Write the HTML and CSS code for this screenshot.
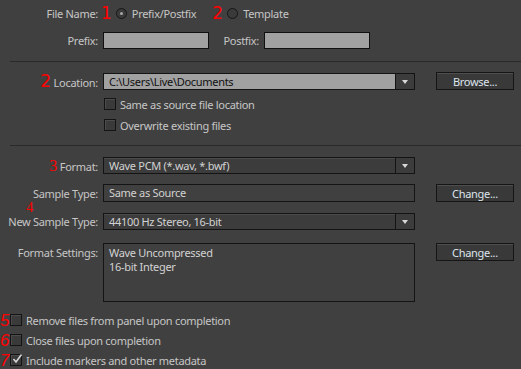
FILE: index.html
```html
<!DOCTYPE html>
<html lang="en">
<head>
    <meta charset="UTF-8">
    <title>Export Settings</title>
    <link rel="stylesheet" href="styles.css">
</head>
<body>
    <div class="panel">
        <!-- file name -->
        <div class="row name-row">
            <span class="label">File Name:</span>
            <span class="mark mark-sans">1</span>
            <span class="radio checked"></span>
            <span class="opt">Prefix/Postfix</span>
            <span class="mark mark-sans mark-two">2</span>
            <span class="radio"></span>
            <span class="opt">Template</span>
        </div>
        <div class="row prefix-row">
            <span class="label">Prefix:</span>
            <span class="textbox small"></span>
            <span class="sub-label">Postfix:</span>
            <span class="textbox small"></span>
        </div>

        <div class="divider"></div>

        <!-- location -->
        <div class="row loc-row">
            <span class="label"><span class="mark mark-sans">2</span> Location:</span>
            <div class="combo light">
                <span class="combo-text">C:\Users\Live\Documents</span>
                <span class="combo-arrow"></span>
            </div>
            <button class="btn">Browse...</button>
        </div>
        <div class="check-row top-check first">
            <span class="checkbox"></span>
            <span>Same as source file location</span>
        </div>
        <div class="check-row top-check">
            <span class="checkbox"></span>
            <span>Overwrite existing files</span>
        </div>

        <div class="divider second"></div>

        <!-- format -->
        <div class="row fmt-row">
            <span class="label"><span class="mark mark-serif">3</span> Format:</span>
            <div class="combo">
                <span class="combo-text">Wave PCM (*.wav, *.bwf)</span>
                <span class="combo-arrow"></span>
            </div>
        </div>
        <div class="row type-row">
            <span class="label">Sample Type:</span>
            <div class="field-box">Same as Source</div>
            <button class="btn">Change...</button>
        </div>
        <div class="row new-type-row">
            <span class="mark mark-serif mark-four">4</span>
            <span class="label">New Sample Type:</span>
            <div class="combo">
                <span class="combo-text">44100 Hz Stereo, 16-bit</span>
                <span class="combo-arrow"></span>
            </div>
        </div>
        <div class="row settings-row">
            <span class="label">Format Settings:</span>
            <div class="settings-box">
                <div>Wave Uncompressed</div>
                <div>16-bit Integer</div>
            </div>
            <button class="btn">Change...</button>
        </div>

        <!-- options -->
        <div class="check-row bottom-check first">
            <span class="mark mark-italic">5</span>
            <span class="checkbox"></span>
            <span>Remove files from panel upon completion</span>
        </div>
        <div class="check-row bottom-check">
            <span class="mark mark-italic">6</span>
            <span class="checkbox"></span>
            <span>Close files upon completion</span>
        </div>
        <div class="check-row bottom-check">
            <span class="mark mark-italic">7</span>
            <span class="checkbox ticked">
                <svg width="12" height="12" viewBox="0 0 12 12"><path d="M2.5 6 L5 9 L10.5 1.5" fill="none" stroke="#d8d8d8" stroke-width="1.6"/></svg>
            </span>
            <span>Include markers and other metadata</span>
        </div>
    </div>
</body>
</html>
```

FILE: styles.css
```css
body {
    margin: 0;
    background-color: #404040;
    font-family: "Noto Sans", "DejaVu Sans", sans-serif;
    font-size: 11px;
    letter-spacing: -0.3px;
    color: #c6c6c6;
}

.panel {
    width: 521px;
    height: 369px;
    overflow: hidden;
    padding-top: 5px;
    box-sizing: border-box;
}

.row {
    display: flex;
    align-items: center;
    position: relative;
}

.label {
    width: 98px;
    flex: none;
    text-align: right;
    white-space: nowrap;
}

/* red annotation numbers */
.mark {
    color: #ff0000;
    line-height: 1;
    letter-spacing: 0;
}

.mark-sans {
    font-family: "DejaVu Sans", sans-serif;
    font-size: 17px;
}

.mark-serif {
    font-family: "Liberation Serif", serif;
    font-size: 16px;
}

.mark-italic {
    font-family: "Liberation Sans", sans-serif;
    font-style: italic;
    font-size: 17px;
    width: 10px;
}

.name-row {
    height: 16px;
}

.name-row .mark {
    margin-left: 3px;
}

.mark-two {
    margin-left: 16px !important;
}

.radio {
    width: 9px;
    height: 9px;
    border: 1px solid #161616;
    border-radius: 50%;
    background: #3a3a3a;
    margin-left: 4px;
    position: relative;
}

.radio.checked::after {
    content: "";
    position: absolute;
    left: 3px;
    top: 3px;
    width: 3px;
    height: 3px;
    border-radius: 50%;
    background: #a8a8a8;
}

.opt {
    margin-left: 5px;
}

.prefix-row {
    margin-top: 11px;
}

.textbox {
    height: 15px;
    background: #a1a1a1;
    border: 1px solid #101010;
    margin-left: 5px;
}

.textbox.small {
    width: 104px;
}

.sub-label {
    margin-left: 14px;
    width: 36px;
    text-align: right;
}

.divider {
    height: 1px;
    background: #2a2a2a;
    margin: 12px 0 0 10px;
}

.divider.second {
    margin-top: 14px;
}

.loc-row {
    margin-top: 10px;
}

.combo {
    width: 310px;
    height: 15px;
    margin-left: 5px;
    border: 1px solid #141414;
    background: #3c3c3c;
    box-shadow: inset 0 1px 0 #4c4c4c;
    display: flex;
    align-items: center;
    color: #d2d2d2;
}

.combo.light {
    background: #a1a1a1;
    box-shadow: none;
    color: #111;
}

.combo-text {
    flex: 1;
    padding-left: 5px;
    white-space: nowrap;
}

.combo-arrow {
    width: 18px;
    height: 15px;
    border-left: 1px solid #141414;
    background: #3c3c3c;
    position: relative;
}

.combo-arrow::after {
    content: "";
    position: absolute;
    left: 6px;
    top: 6px;
    border-left: 3px solid transparent;
    border-right: 3px solid transparent;
    border-top: 4px solid #d8d8d8;
}

.btn {
    width: 78px;
    height: 18px;
    margin-left: 21px;
    padding: 0;
    background: #393939;
    border: 1px solid #151515;
    box-shadow: inset 0 1px 0 #4e4e4e;
    font-family: "Noto Sans", "DejaVu Sans", sans-serif;
    font-size: 11px;
    letter-spacing: -0.3px;
    color: #dde4ec;
}

.check-row {
    display: flex;
    align-items: center;
    height: 12px;
}

.checkbox {
    width: 10px;
    height: 10px;
    border: 1px solid #141414;
    background: #3a3a3a;
    box-shadow: inset 1px 1px 0 #4c4c4c;
    margin-right: 4px;
    position: relative;
    flex: none;
}

.checkbox svg {
    position: absolute;
    left: 0;
    top: -2px;
}

.top-check {
    margin-left: 104px;
    margin-top: 9px;
}

.top-check.first {
    margin-top: 8px;
}

.fmt-row {
    margin-top: 11px;
}

.type-row {
    margin-top: 10px;
}

.field-box {
    width: 305px;
    height: 16px;
    margin-left: 5px;
    padding-left: 5px;
    border: 1px solid #141414;
    line-height: 16px;
    color: #d2d2d2;
}

.new-type-row {
    margin-top: 11px;
}

.mark-four {
    position: absolute;
    left: 26px;
    top: -13px;
    font-size: 15px;
}

.settings-row {
    margin-top: 13px;
    align-items: flex-start;
}

.settings-row .label {
    padding-top: 2px;
}

.settings-box {
    width: 305px;
    margin-left: 5px;
    padding: 2px 0 0 5px;
    border: 1px solid #141414;
    line-height: 14px;
    color: #d2d2d2;
    height: 55px;
}

.bottom-check {
    margin-top: 8px;
}

.bottom-check.first {
    margin-top: 12px;
}
```
